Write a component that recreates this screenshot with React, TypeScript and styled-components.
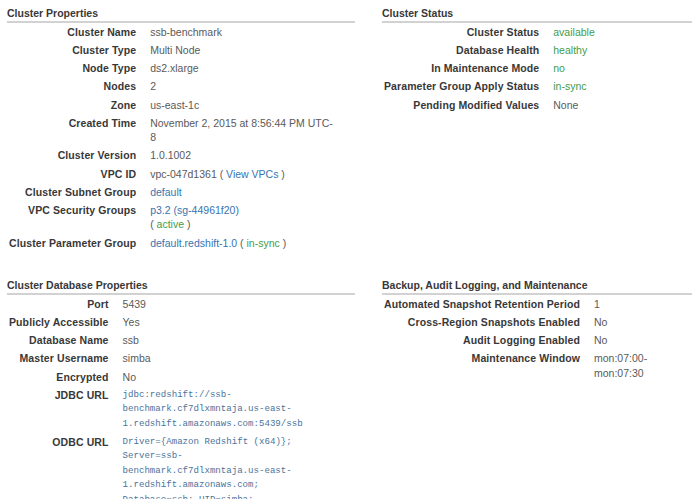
import React from "react";
import styled, { createGlobalStyle } from "styled-components";

const GlobalStyle = createGlobalStyle`
  html, body { margin: 0; padding: 0; background: #ffffff; }
  body {
    font-family: "Liberation Sans", Arial, Helvetica, sans-serif;
    font-size: 10.5px;
    color: #555555;
  }
`;

const Page = styled.div`
  display: grid;
  grid-template-columns: 348px 310px;
  column-gap: 27px;
  row-gap: 20px;
  padding-left: 7px;
  align-items: start;
`;

const Section = styled.section`
  display: flex;
  flex-direction: column;
`;

const Heading = styled.h3`
  margin: 0;
  padding: 7px 0 1px 0;
  font-size: 10.5px;
  line-height: 13px;
  font-weight: bold;
  color: #383838;
  border-bottom: 2px solid #d2d2d2;
`;

const Table = styled.div<{ $valueWidth: number }>`
  display: grid;
  grid-template-columns: max-content ${(p) => p.$valueWidth}px;
  padding-left: 2px;
`;

const Label = styled.div`
  text-align: right;
  font-weight: bold;
  color: #383838;
  line-height: 14.4px;
  padding: 1.9px 14px 1.9px 0;
  white-space: nowrap;
  letter-spacing: 0.1px;
`;

const Value = styled.div<{ $mono?: boolean }>`
  color: #5a5a5a;
  line-height: ${(p) => (p.$mono ? "14.5px" : "14.4px")};
  padding: 1.9px 0;
  font-family: ${(p) =>
    p.$mono ? '"Liberation Mono", "Courier New", monospace' : "inherit"};
  font-size: ${(p) => (p.$mono ? "9.1px" : "10.5px")};
  ${(p) => (p.$mono ? "color: #4a739c;" : "")}
`;

const Link = styled.span`
  color: #3874b0;
`;

const Ok = styled.span`
  color: #3f9c4c;
`;

type Row = { label: string; value: React.ReactNode; mono?: boolean };

const Props: React.FC<{ title: string; rows: Row[]; valueWidth: number }> = ({
  title,
  rows,
  valueWidth,
}) => (
  <Section>
    <Heading>{title}</Heading>
    <Table $valueWidth={valueWidth}>
      {rows.map((r) => (
        <React.Fragment key={r.label}>
          <Label>{r.label}</Label>
          <Value $mono={r.mono}>{r.value}</Value>
        </React.Fragment>
      ))}
    </Table>
  </Section>
);

const clusterProps: Row[] = [
  { label: "Cluster Name", value: "ssb-benchmark" },
  { label: "Cluster Type", value: "Multi Node" },
  { label: "Node Type", value: "ds2.xlarge" },
  { label: "Nodes", value: "2" },
  { label: "Zone", value: "us-east-1c" },
  {
    label: "Created Time",
    value: (
      <>
        November 2, 2015 at 8:56:44 PM UTC-
        <br />8
      </>
    ),
  },
  { label: "Cluster Version", value: "1.0.1002" },
  {
    label: "VPC ID",
    value: (
      <>
        vpc-047d1361 ( <Link>View VPCs</Link> )
      </>
    ),
  },
  { label: "Cluster Subnet Group", value: <Link>default</Link> },
  {
    label: "VPC Security Groups",
    value: (
      <>
        <Link>p3.2 (sg-44961f20)</Link>
        <br />( <Ok>active</Ok> )
      </>
    ),
  },
  {
    label: "Cluster Parameter Group",
    value: (
      <>
        <Link>default.redshift-1.0</Link> ( <Ok>in-sync</Ok> )
      </>
    ),
  },
];

const clusterStatus: Row[] = [
  { label: "Cluster Status", value: <Ok>available</Ok> },
  { label: "Database Health", value: <Ok>healthy</Ok> },
  { label: "In Maintenance Mode", value: <Ok>no</Ok> },
  { label: "Parameter Group Apply Status", value: <Ok>in-sync</Ok> },
  { label: "Pending Modified Values", value: "None" },
];

const dbProps: Row[] = [
  { label: "Port", value: "5439" },
  { label: "Publicly Accessible", value: "Yes" },
  { label: "Database Name", value: "ssb" },
  { label: "Master Username", value: "simba" },
  { label: "Encrypted", value: "No" },
  {
    label: "JDBC URL",
    mono: true,
    value: (
      <>
        jdbc:redshift://ssb-
        <br />
        benchmark.cf7dlxmntaja.us-east-
        <br />
        1.redshift.amazonaws.com:5439/ssb
      </>
    ),
  },
  {
    label: "ODBC URL",
    mono: true,
    value: (
      <>
        Driver={"{"}Amazon Redshift (x64){"}"};
        <br />
        Server=ssb-
        <br />
        benchmark.cf7dlxmntaja.us-east-
        <br />
        1.redshift.amazonaws.com;
        <br />
        Database=ssb; UID=simba;
        <br />
        Port=5439
      </>
    ),
  },
];

const backup: Row[] = [
  { label: "Automated Snapshot Retention Period", value: "1" },
  { label: "Cross-Region Snapshots Enabled", value: "No" },
  { label: "Audit Logging Enabled", value: "No" },
  {
    label: "Maintenance Window",
    value: (
      <>
        mon:07:00-
        <br />
        mon:07:30
      </>
    ),
  },
];

export default function App() {
  return (
    <>
      <GlobalStyle />
      <Page>
        <Props title="Cluster Properties" rows={clusterProps} valueWidth={190} />
        <Props title="Cluster Status" rows={clusterStatus} valueWidth={130} />
        <Props title="Cluster Database Properties" rows={dbProps} valueWidth={210} />
        <Props
          title="Backup, Audit Logging, and Maintenance"
          rows={backup}
          valueWidth={95}
        />
      </Page>
    </>
  );
}
